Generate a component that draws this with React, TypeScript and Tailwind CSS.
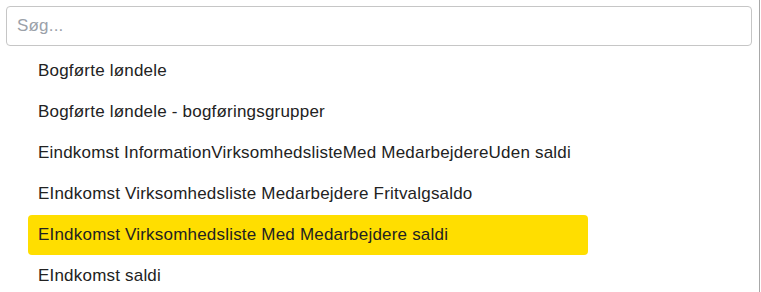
import React from "react";

const items = [
  "Bogførte løndele",
  "Bogførte løndele - bogføringsgrupper",
  "Eindkomst InformationVirksomhedslisteMed MedarbejdereUden saldi",
  "EIndkomst Virksomhedsliste Medarbejdere Fritvalgsaldo",
  "EIndkomst Virksomhedsliste Med Medarbejdere saldi",
  "EIndkomst saldi",
];

export default function App() {
  return (
    <div
      className="w-[760px] h-[292px] overflow-hidden bg-white border-r border-[#a8a8a8] pt-[6px] pl-[6px]"
      style={{ fontFamily: '"Liberation Sans", Arial, sans-serif' }}
    >
      <input
        type="text"
        placeholder="Søg..."
        className="block w-[746px] h-[40px] rounded-[4px] border border-[#c6c6c6] bg-white px-[10px] text-[17px] tracking-[0.2px] text-[#222] placeholder:text-[#9ba1a9] outline-none"
      />
      <ul className="mt-[5px] ml-[22px] flex flex-col gap-[1px]">
        {items.map((t, i) => (
          <li
            key={i}
            className={
              i === 4
                ? "w-[560px] h-[40px] flex items-center px-[10px] rounded-[4px] bg-[#ffde00] text-[17px] tracking-[0.2px] text-[#222]"
                : "w-[560px] h-[40px] flex items-center px-[10px] text-[17px] tracking-[0.2px] text-[#222]"
            }
          >
            {t}
          </li>
        ))}
      </ul>
    </div>
  );
}
